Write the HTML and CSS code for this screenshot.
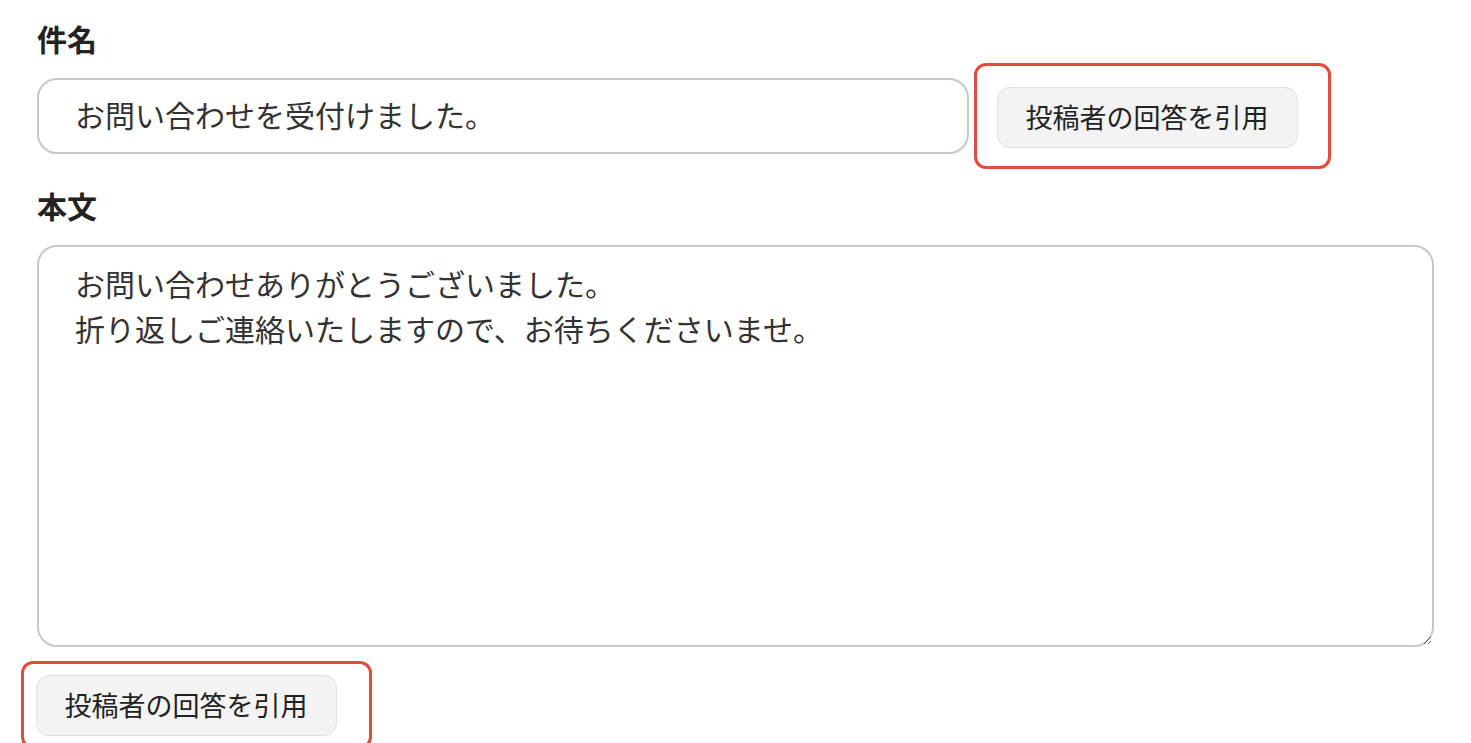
FILE: index.html
```html
<!DOCTYPE html>
<html lang="ja">
<head>
<meta charset="utf-8">
<title>件名・本文</title>
<link rel="stylesheet" href="styles.css">
</head>
<body>
<main class="form">
  <div class="field-label">件名</div>
  <div class="subject-row">
    <input class="subject-input" type="text" value="お問い合わせを受付けました。">
    <div class="quote-box quote-box--top">
      <button class="quote-btn" type="button">投稿者の回答を引用</button>
    </div>
  </div>
  <div class="field-label field-label--body">本文</div>
  <textarea class="body-input">お問い合わせありがとうございました。
折り返しご連絡いたしますので、お待ちくださいませ。</textarea>
  <div class="quote-box quote-box--bottom">
    <button class="quote-btn" type="button">投稿者の回答を引用</button>
  </div>
</main>
</body>
</html>
```
FILE: styles.css
```css
html, body {
  margin: 0;
  padding: 0;
  background: #ffffff;
  overflow: hidden;
}

body {
  font-family: "Noto Sans CJK JP", "Noto Sans", sans-serif;
  color: #333333;
}

.form {
  padding: 16px 0 0 37px;
  display: flex;
  flex-direction: column;
  align-items: flex-start;
}

.field-label {
  font-size: 30px;
  font-weight: 700;
  line-height: 44px;
  color: #222222;
}

.field-label--body {
  margin-top: 14px;
}

.subject-row {
  margin-top: 3px;
  display: flex;
  align-items: center;
  gap: 5px;
}

.subject-input {
  box-sizing: border-box;
  width: 932px;
  height: 76px;
  border: 2px solid #c8c8c8;
  border-radius: 20px;
  padding: 0 20px 4px 36px;
  font-family: inherit;
  font-size: 30px;
  color: #333333;
  background: #ffffff;
  outline: none;
}

.quote-box {
  box-sizing: border-box;
  border: 3.5px solid #e34c3a;
  border-radius: 12px;
}

.quote-box--top {
  padding: 21px 30px 18px 19.5px;
}

.quote-box--bottom {
  margin-top: 14px;
  margin-left: -16px;
  padding: 10.5px 32px 10px 11.5px;
}

.quote-btn {
  box-sizing: border-box;
  width: 301px;
  height: 61px;
  border: 1px solid #e0e0e0;
  border-radius: 13px;
  background: #f3f3f3;
  font-family: inherit;
  font-size: 27px;
  color: #222222;
  padding: 0 0 2px 0;
  cursor: pointer;
}

.body-input {
  box-sizing: border-box;
  margin-top: 18px;
  width: 1397px;
  height: 402px;
  border: 2px solid #c8c8c8;
  border-radius: 20px;
  padding: 14px 20px 10px 36px;
  font-family: inherit;
  font-size: 30px;
  line-height: 45px;
  color: #333333;
  background: #ffffff;
  outline: none;
  resize: both;
}
```
